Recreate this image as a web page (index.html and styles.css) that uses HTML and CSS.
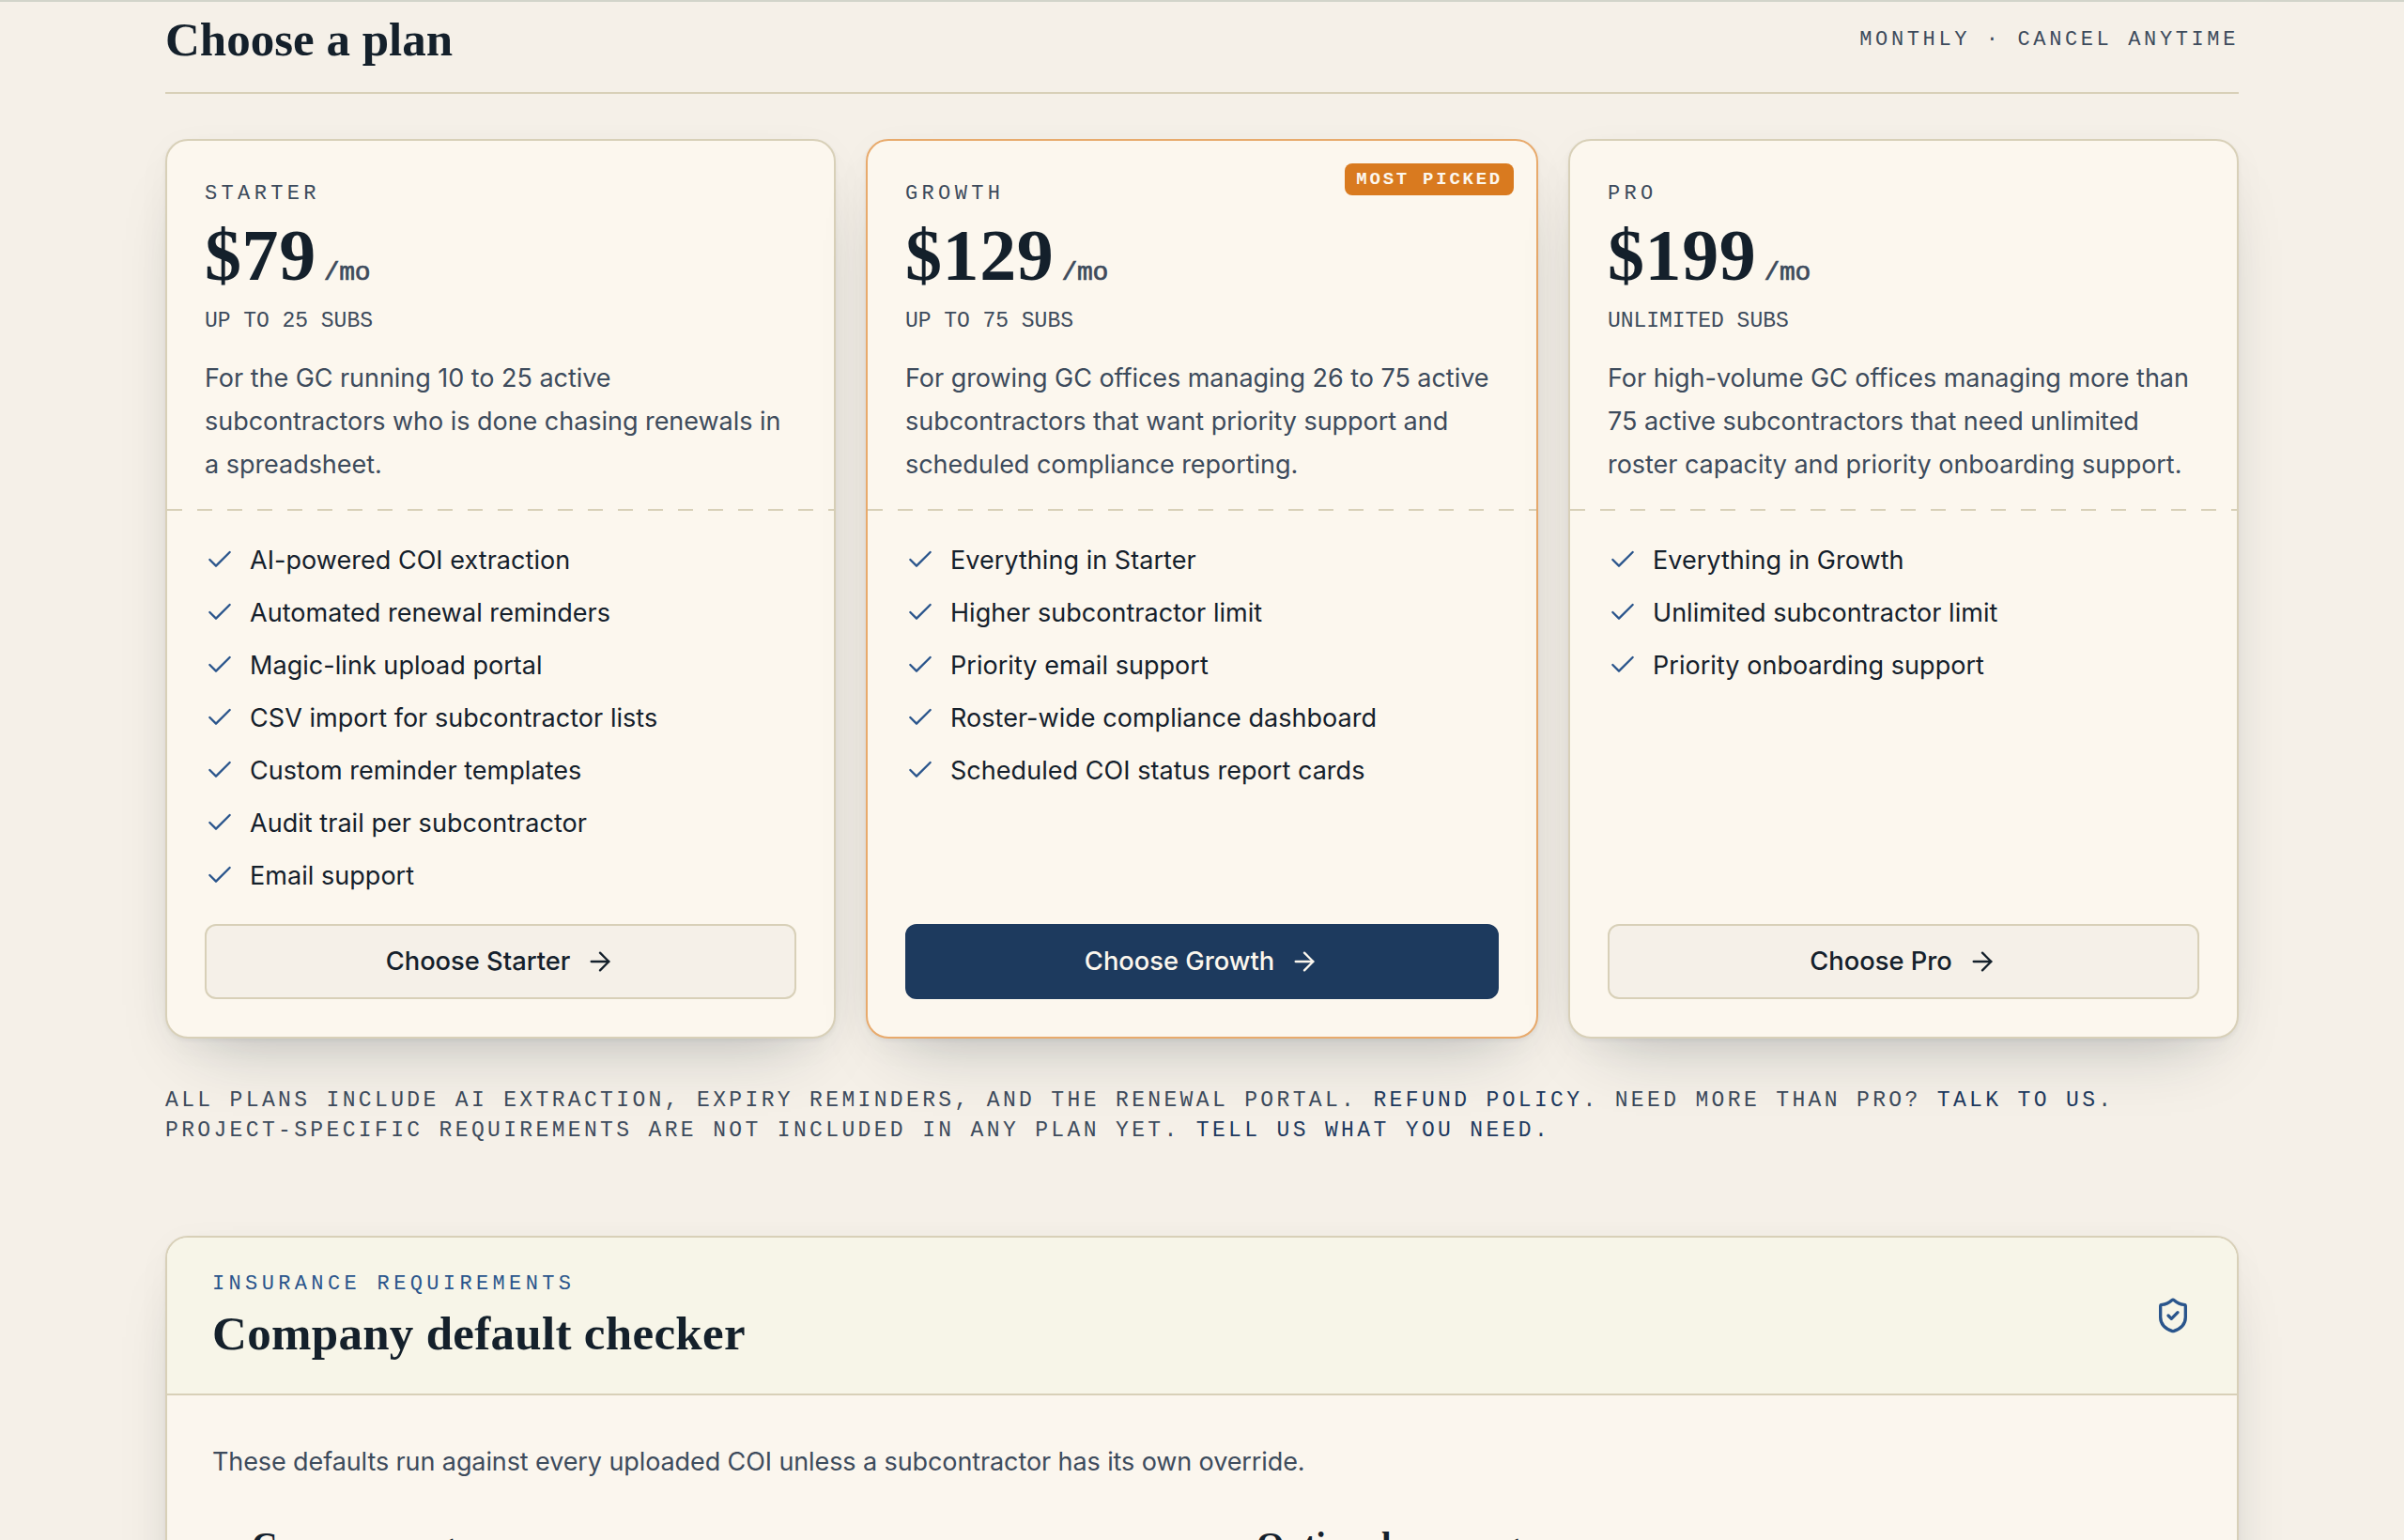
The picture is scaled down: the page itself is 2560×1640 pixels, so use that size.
FILE: index.html
```
<!DOCTYPE html>
<html lang="en">
<head>
<meta charset="utf-8">
<title>Choose a plan</title>
<link rel="stylesheet" href="styles.css">
</head>
<body>
<svg class="sprite" aria-hidden="true">
  <symbol id="check" viewBox="0 0 24 24"><path d="M20 6 9 17l-5-5"/></symbol>
  <symbol id="arrow" viewBox="0 0 24 24"><path d="M5 12h14"/><path d="m12 5 7 7-7 7"/></symbol>
  <symbol id="shield" viewBox="0 0 24 24"><path d="M20 13c0 5-3.5 7.5-7.66 8.95a1 1 0 0 1-.67-.01C7.5 20.5 4 18 4 13V6a1 1 0 0 1 1-1c2 0 4.5-1.2 6.24-2.72a1.17 1.17 0 0 1 1.52 0C14.51 3.81 17 5 19 5a1 1 0 0 1 1 1z"/><path d="m9 12 2 2 4-4"/></symbol>
</svg>
<main class="page">
  <header class="section-head">
    <h2 class="title">Choose a plan</h2>
    <span class="meta">Monthly · Cancel anytime</span>
  </header>

  <section class="plans">
    <article class="plan">
      <div class="plan-top">
        <h3 class="plan-name">Starter</h3>
        <p class="price">$79<span class="per">/mo</span></p>
        <p class="limit">Up to 25 subs</p>
        <p class="desc">For the GC running 10 to 25 active<br>subcontractors who is done chasing renewals in<br>a spreadsheet.</p>
      </div>
      <div class="divider"></div>
      <ul class="features">
        <li><svg class="icon"><use href="#check"/></svg>AI-powered COI extraction</li>
        <li><svg class="icon"><use href="#check"/></svg>Automated renewal reminders</li>
        <li><svg class="icon"><use href="#check"/></svg>Magic-link upload portal</li>
        <li><svg class="icon"><use href="#check"/></svg>CSV import for subcontractor lists</li>
        <li><svg class="icon"><use href="#check"/></svg>Custom reminder templates</li>
        <li><svg class="icon"><use href="#check"/></svg>Audit trail per subcontractor</li>
        <li><svg class="icon"><use href="#check"/></svg>Email support</li>
      </ul>
      <a class="button">Choose Starter<svg class="icon"><use href="#arrow"/></svg></a>
    </article>

    <article class="plan featured">
      <span class="badge">Most picked</span>
      <div class="plan-top">
        <h3 class="plan-name">Growth</h3>
        <p class="price">$129<span class="per">/mo</span></p>
        <p class="limit">Up to 75 subs</p>
        <p class="desc">For growing GC offices managing 26 to 75 active<br>subcontractors that want priority support and<br>scheduled compliance reporting.</p>
      </div>
      <div class="divider"></div>
      <ul class="features">
        <li><svg class="icon"><use href="#check"/></svg>Everything in Starter</li>
        <li><svg class="icon"><use href="#check"/></svg>Higher subcontractor limit</li>
        <li><svg class="icon"><use href="#check"/></svg>Priority email support</li>
        <li><svg class="icon"><use href="#check"/></svg>Roster-wide compliance dashboard</li>
        <li><svg class="icon"><use href="#check"/></svg>Scheduled COI status report cards</li>
      </ul>
      <a class="button primary">Choose Growth<svg class="icon"><use href="#arrow"/></svg></a>
    </article>

    <article class="plan">
      <div class="plan-top">
        <h3 class="plan-name">Pro</h3>
        <p class="price">$199<span class="per">/mo</span></p>
        <p class="limit">Unlimited subs</p>
        <p class="desc">For high-volume GC offices managing more than<br>75 active subcontractors that need unlimited<br>roster capacity and priority onboarding support.</p>
      </div>
      <div class="divider"></div>
      <ul class="features">
        <li><svg class="icon"><use href="#check"/></svg>Everything in Growth</li>
        <li><svg class="icon"><use href="#check"/></svg>Unlimited subcontractor limit</li>
        <li><svg class="icon"><use href="#check"/></svg>Priority onboarding support</li>
      </ul>
      <a class="button">Choose Pro<svg class="icon"><use href="#arrow"/></svg></a>
    </article>
  </section>

  <p class="footnote">All plans include AI extraction, expiry reminders, and the renewal portal. <a>Refund policy</a>. Need more than Pro? <a>Talk to us</a>.<br>Project-specific requirements are not included in any plan yet. <a>Tell us what you need.</a></p>

  <section class="panel">
    <header class="panel-head">
      <div>
        <p class="eyebrow">Insurance requirements</p>
        <h2 class="title wide">Company default checker</h2>
      </div>
      <svg class="icon shield"><use href="#shield"/></svg>
    </header>
    <div class="panel-body">
      <p class="intro">These defaults run against every uploaded COI unless a subcontractor has its own override.</p>
      <div class="groups">
        <h3 class="group-title">Core coverage</h3>
        <h3 class="group-title">Optional coverage</h3>
      </div>
    </div>
  </section>
</main>
</body>
</html>
```
FILE: styles.css
```
:root {
  --paper: #f5f0e8;
  --card: #fcf7ee;
  --line: #d8d0b8;
  --ink: #14202b;
  --muted: #3d4b5c;
  --navy: #1e3a5f;
  --blue: #2a558c;
  --sans: Inter, "Liberation Sans", sans-serif;
  --serif: "Liberation Serif", serif;
  --mono: "Liberation Mono", monospace;
  --shadow: 0 2px 4px rgba(20, 40, 50, .06), 0 8px 40px rgba(20, 40, 50, .03), 0 36px 72px -36px rgba(20, 40, 50, .28);
}
* { box-sizing: border-box; }
h2, h3, p, ul { margin: 0; padding: 0; }
body {
  margin: 0;
  height: 1640px;
  overflow: hidden;
  border-top: 2px solid #d2d4ca;
  background: var(--paper);
  color: var(--ink);
  font: 400 27px/46px var(--sans);
}
.sprite { display: none; }
.icon {
  width: 32px;
  height: 32px;
  flex: none;
  fill: none;
  stroke: currentColor;
  stroke-width: 1.75;
  stroke-linecap: round;
  stroke-linejoin: round;
}
.page { height: 1638px; padding: 0 176px; overflow: hidden; }

.section-head {
  display: flex;
  align-items: center;
  justify-content: space-between;
  height: 98px;
  padding: 12px 0 28px;
  border-bottom: 2px solid var(--line);
}
.title { font: 700 51px/56px var(--serif); }
.title.wide { letter-spacing: .3px; }
.meta, .plan-name, .limit, .footnote, .eyebrow, .badge {
  font-family: var(--mono);
  font-weight: 400;
  text-transform: uppercase;
  color: var(--muted);
}
.meta { padding-top: 2px; font-size: 22px; line-height: 28px; letter-spacing: 3.62px; }

.plans {
  display: grid;
  grid-template-columns: 714px 716px 714px;
  gap: 32px;
  margin-top: 48px;
}
.plan {
  position: relative;
  display: flex;
  flex-direction: column;
  height: 958px;
  padding-bottom: 40px;
  border: 2px solid var(--line);
  border-radius: 24px;
  background: var(--card);
  box-shadow: var(--shadow);
}
.featured { border-color: #e8aa6c; }
.badge {
  position: absolute;
  top: 24px;
  right: 24px;
  padding: 0 12px;
  border-radius: 8px;
  background: #d97a1f;
  color: var(--card);
  font-size: 19px;
  font-weight: 700;
  line-height: 34px;
  letter-spacing: 2.75px;
}
.plan-top { padding: 43px 40px 24px; white-space: nowrap; }
.plan-name { font-size: 22px; line-height: 28px; letter-spacing: 4.35px; }
.price { margin-top: 12px; font: 700 78px/78px var(--serif); letter-spacing: .6px; }
.per {
  margin-left: 8px;
  font: 400 28px/28px var(--mono);
  letter-spacing: -.3px;
  color: var(--muted);
  -webkit-text-stroke: .7px var(--muted);
}
.limit { margin-top: 15px; font-size: 23px; line-height: 32px; letter-spacing: -.04px; }
.desc { margin-top: 22px; color: var(--muted); letter-spacing: -.04px; }
.divider {
  height: 2px;
  background: repeating-linear-gradient(90deg, var(--line) 0 16px, transparent 16px 32px);
}
.features {
  display: flex;
  flex-direction: column;
  gap: 16px;
  padding: 32px 40px 0;
  list-style: none;
}
.features li { display: flex; align-items: center; gap: 16px; height: 40px; line-height: 38px; padding-top: 2px; letter-spacing: .04px; }
.features .icon { margin-top: -2px; color: var(--blue); }
.button {
  display: flex;
  align-items: center;
  justify-content: center;
  gap: 16px;
  height: 80px;
  margin: auto 40px 0;
  border: 2px solid var(--line);
  border-radius: 12px;
  background: var(--paper);
  font-size: 27.3px;
  font-weight: 500;
}
.button.primary { border-color: #1d3a5e; background: #1d3a5e; color: var(--card); }

.footnote { margin-top: 50px; font-size: 23px; line-height: 32px; letter-spacing: 3.35px; white-space: nowrap; }
.footnote a { color: var(--navy); }

.panel {
  height: 700px;
  margin-top: 96px;
  border: 2px solid var(--line);
  border-radius: 24px;
  background: #fbf6ee;
  box-shadow: var(--shadow);
}
.panel-head {
  display: flex;
  align-items: center;
  justify-content: space-between;
  height: 168px;
  padding: 36px 48px 36px;
  border-bottom: 2px solid var(--line);
  border-radius: 22px 22px 0 0;
  background: #f7f5e8;
}
.eyebrow { margin-bottom: 10px; font-size: 22px; line-height: 28px; letter-spacing: 4.36px; color: var(--blue); }
.shield { width: 40px; height: 40px; stroke-width: 2; color: var(--blue); }
.panel-body { padding: 48px 48px 0; }
.intro { color: var(--muted); letter-spacing: -.1px; }
.groups { display: grid; grid-template-columns: 1fr 1fr; gap: 32px; margin-top: 41px; }
.group-title { padding-left: 42px; font: 700 38px/48px var(--serif); }
```
